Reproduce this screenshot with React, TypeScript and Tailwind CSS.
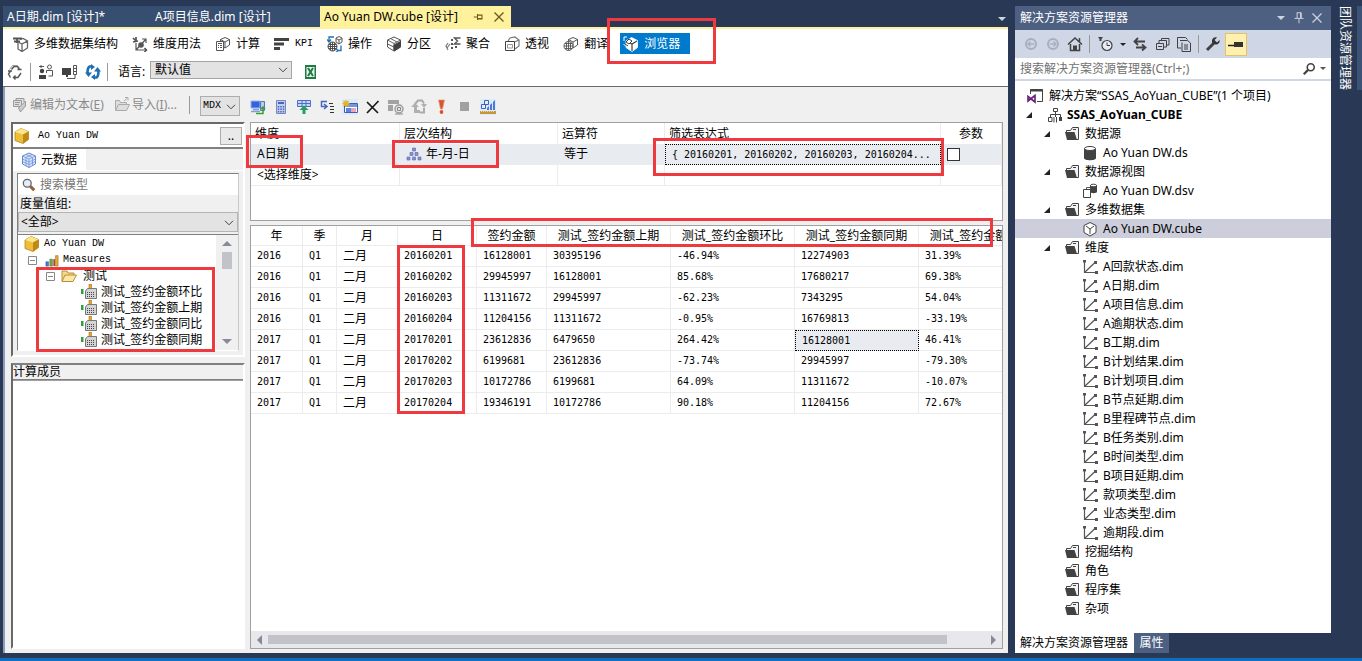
import React from "react";

type IconProps = { children: React.ReactNode; className?: string };

const Icon: React.FC<IconProps> = ({ children, className = "w-4 h-4" }) => (
  <svg
    viewBox="0 0 16 16"
    fill="none"
    stroke="#424242"
    className={`shrink-0 ${className}`}
    aria-hidden="true"
  >
    {children}
  </svg>
);

// Khối lập phương nhỏ dùng lại trong nhiều icon
const CubeLines = ({ stroke = "#555", fill = "#fff" }) => (
  <path d="M10 1.5l4.5 2v5.5L10 12 5.500 9V3.500zM5.500 3.500L10 6l4.500-2.500M10 6v6" stroke={stroke} fill={fill} />
);

const StructureIcon = () => (
  <Icon>
    <path d="M5 5v8l4 2.500 5.500-3.500V5L10 2.500 7 3.500M9 15V8l5.500-3M9 8L6 6.500" stroke="#666" strokeWidth="1.300" fill="#fff" />
    <path d="M0 2.500h9M1 5.500h6M4 3v4" stroke="#555" strokeWidth="1.800" />
  </Icon>
);

const UsageIcon = () => (
  <Icon>
    <path d="M1 2l3 3M4 1v5M1 6l5-1" stroke="#555" strokeWidth="1.700" />
    <path d="M4 7v7h10M4 14L14 3M10 3h4v4" stroke="#555" strokeWidth="1.200" />
    <circle cx="9" cy="9" r="2.800" fill="#555" stroke="none" />
    <path d="M12.500 12l2 2-2 2" strokeWidth="1.400" />
  </Icon>
);

const CalcIcon = () => (
  <Icon>
    <CubeLines />
    <path d="M1.500 5.500h7v9h-7z" fill="#fff" stroke="#555" />
    <path d="M3 7.500h4M3 9.500h1M5 9.500h2M3 11.500h1M5 11.500h2" stroke="#555" />
  </Icon>
);

const KpiIcon = () => (
  <Icon>
    <path d="M0 3.500h15M0 8h10M0 12.500h6" stroke="#424242" strokeWidth="3" />
  </Icon>
);

const ActionIcon = () => (
  <Icon>
    <path d="M7 1H2v4M0 3.500L2 6l2-2.500M11 14.500h3v-5M9 12.500l2 2-2 2" stroke="#1e6fb8" strokeWidth="1.300" />
    <path d="M12 .5l3 1.500v4L12 8 9 6V2zM9 2.500L12 4l3-1.500M12 4v4" fill="#fff" stroke="#555" />
    <circle cx="5.500" cy="10.500" r="4.500" fill="#fff" stroke="#424242" />
    <path d="M1 10.500h9M5.500 6v9M2 8.500h7M2 12.500h7M3.500 7v7M7.500 7v7" stroke="#424242" strokeWidth=".9" />
  </Icon>
);

const PartitionIcon = () => (
  <Icon>
    <path d="M8 1l6.500 3v7L8 15 1.500 11V4z" fill="#fff" stroke="#555" />
    <path d="M1.500 4L8 7.500l6.500-3.500M8 7.500V15M4.500 2.500L11 6" stroke="#666" />
    <path d="M8 9l6.500-3.500V11L8 15z" fill="#424242" />
    <path d="M1.500 8L8 11" stroke="#555" />
  </Icon>
);

const AggregateIcon = () => (
  <Icon>
    <path d="M15.500 2H9.500l3 3-3 3h6" stroke="#555" strokeWidth="1.400" />
    <path d="M3 7l-2 3 2 4M5 8l-3 4" stroke="#777" strokeWidth="1.200" />
    <path d="M6 3h2v2H6zM6 7h2v2H6zM6 11h2v2H6zM10 10h2v2h-2z" fill="#555" stroke="none" />
  </Icon>
);

const PerspectiveIcon = () => (
  <Icon>
    <path d="M4 5l2-3 5-1 4 3v6l-4 3M10.500 6L15 4" stroke="#777" strokeWidth="1.200" />
    <path d="M1.500 5.500h9v9h-9z" fill="#fff" stroke="#424242" />
    <path d="M3.500 8.500h5v3.500h-5z" stroke="#999" />
  </Icon>
);

const TranslateIcon = () => (
  <Icon>
    <CubeLines />
    <circle cx="5.500" cy="10" r="4.500" fill="#fff" stroke="#555" />
    <path d="M1 10h9M5.500 5.500v9M2 7.500h7M2 12.500h7M3.500 6.500v7M7.500 6.500v7" stroke="#555" strokeWidth=".9" />
  </Icon>
);

const BrowserIcon = () => (
  <Icon>
    <path d="M8.500 1.500l6 3v7L9 15.500l-6-4V5z" fill="#fff" stroke="#e8f1f8" />
    <path d="M4 5.500L9 8l5-3M9 8v7" stroke="#424242" strokeWidth="1.200" />
    <path d="M3 6l3-3 3 2-3 3zM2 8l3 2" fill="#fff" stroke="#424242" />
    <path d="M1 5V1h3M.5 8l2 2" stroke="#fff" />
  </Icon>
);

const ProcessIcon = () => (
  <Icon>
    <path d="M4.500 5.500L7 2.500h3.500l2 3M10.500 5.500h4M3.500 7L1.500 10l2 3.500M1 7h4M6.500 13.500H11l3-4.500M8.500 11.500l-2 2 2 2" stroke="#555" strokeWidth="1.400" />
    <path d="M2.500 5.500L5.500 1.500h5l2.500 3" stroke="#999" />
  </Icon>
);

const UsersIcon = () => (
  <Icon>
    <circle cx="4" cy="7" r="2.200" fill="#424242" stroke="none" />
    <path d="M1 11h7v4H1z" fill="#424242" stroke="none" />
    <circle cx="11.500" cy="3" r="2" stroke="#555" />
    <path d="M8.500 9V6.500h6V12h-4M1 2.500h5M3 4V1" stroke="#555" />
  </Icon>
);

const ConnectIcon = () => (
  <Icon>
    <path d="M0 4h9v7H0zM4 11h2v2H4z" fill="#424242" stroke="none" />
    <path d="M11.500 1.500h3v9h-3zM13 10v4.500H5M12 4.500h2M12 7.500h2" stroke="#555" />
  </Icon>
);

const ReconnectIcon = ({ stroke = "#1a6fb5" }) => (
  <Icon>
    <path d="M6 2.500H4.500Q2.500 4 2.500 8l1 2M10 13.500h1.500Q13.500 12 13.500 8l-1-2" stroke={stroke} strokeWidth="2.500" />
    <path d="M6 0v6l4-3zM10 10v6l-4-3zM0 8.500h7L3.500 13zM9 7.500h7L12.500 3z" fill={stroke} stroke="none" />
  </Icon>
);

const ExcelIcon = () => (
  <Icon>
    <path d="M3 1h11v14H3z" fill="#1f7a45" stroke="none" />
    <path d="M4.500 3h8v10h-8z" fill="#e8f4ec" stroke="none" />
    <path d="M6 4l5 8M11 4l-5 8" stroke="#1f7a45" strokeWidth="2" />
  </Icon>
);

const EditTextIcon = () => (
  <Icon>
    <path d="M1.500 3.500h8v6h-8zM4 3V1.500h8V5M3 5.500h5M3 7.500h4" stroke="#999" fill="#ddd" />
    <path d="M13.500 4v5l-5 6-2-4 3-3z" fill="#ccc" stroke="#999" />
  </Icon>
);

const ImportIcon = () => (
  <Icon>
    <path d="M1.500 13V3.500h4l1 2h6v2M1.500 13.500l3-6h11l-3 6z" fill="#ddd" stroke="#aaa" />
    <path d="M10 4l3-2.500M11 .5h3v3" stroke="#aaa" />
  </Icon>
);

const ServerIcon = () => (
  <Icon>
    <path d="M1 2h9v7H1z" fill="#3563dc" stroke="#98b4ee" />
    <path d="M3 10.500h6M1 12.500h9" stroke="#7f9fd8" strokeWidth="1.500" />
    <path d="M10.500 2.500h4v9h-4z" fill="#bcc9e6" stroke="#5b76b8" />
    <path d="M6 14.500h7V8M11 10l2-2 2 2" stroke="#35a035" strokeWidth="1.500" />
  </Icon>
);

const CalculatorIcon = () => (
  <Icon>
    <path d="M3.500 1.500h9v13h-9z" fill="#c4cfee" stroke="#7489c4" />
    <path d="M5 4h6" stroke="#4c66b5" strokeWidth="2" />
    <path d="M5.500 7v7M8 7v7M10.500 7v7" stroke="#4c66b5" strokeWidth="1.500" strokeDasharray="1.500 1" />
  </Icon>
);

const AddFilterIcon = () => (
  <Icon>
    <path d="M1.500 1.500h13v6h-13z" fill="#c7d6f8" stroke="#4a6fc3" />
    <path d="M2 4.500h12M6 2v5M10 2v5" stroke="#4a6fc3" />
    <path d="M6.500 15v-4H3.500L8 6.500l4.500 4.500h-3v4z" fill="#23a063" stroke="none" />
  </Icon>
);

const AutoIcon = () => (
  <Icon>
    <path d="M8 2.500H2.500v5H7M5 5l3 2.500L5 10" stroke="#4667bd" strokeWidth="1.500" />
    <path d="M10 4.500h4M11 7.500h4M11 10.500h4M11 13.500h4" stroke="#333" />
  </Icon>
);

const DesignIcon = () => (
  <Icon>
    <path d="M2.500 4.500h13v9h-13z" fill="#fff" stroke="#3e5fae" />
    <path d="M3 5h12v3H3z" fill="#7695df" stroke="none" />
    <path d="M4 9h5v4H4z" fill="#5c85e0" stroke="none" />
    <path d="M9 9h5v4H9z" fill="#efa4b4" stroke="none" />
    <path d="M4 1v7M.5 4.500h7M1.500 2l5 5M6.500 2l-5 5" stroke="#e8b31c" strokeWidth="1.300" />
  </Icon>
);

const DeleteIcon = () => (
  <Icon>
    <path d="M2 3l11 11M13.500 2L2 14" stroke="#1a1a1a" strokeWidth="1.700" />
  </Icon>
);

const MdxUserIcon = () => (
  <Icon>
    <path d="M0 1h11v4H0zM0 6h5v6H0z" fill="#a2a2a2" stroke="none" />
    <circle cx="11" cy="10" r="4" fill="#e6e6e6" stroke="#999" strokeWidth="1.400" />
    <path d="M7 15h8M9.500 8.500h3v3h-3z" stroke="#888" />
  </Icon>
);

const GrayCycleIcon = () => (
  <Icon>
    <path d="M4 5l3-3.500h4l2 3M13 9v4.500H9" stroke="#aaa" strokeWidth="2" />
    <path d="M0 8l4-4 4 4H6v3h3v3H3V8zM10 5h6l-3 4z" fill="#b0b0b0" stroke="none" />
  </Icon>
);

const RunIcon = () => (
  <Icon>
    <path d="M4.500 1h6L8.500 10h-2z" fill="#d8552b" stroke="#e79a7c" strokeWidth=".7" />
    <circle cx="7.500" cy="13" r="1.900" fill="#d8552b" stroke="none" />
  </Icon>
);

const StopIcon = () => (
  <Icon>
    <path d="M3 3h9v9H3z" fill="#a0a0a0" stroke="none" />
  </Icon>
);

const ChartIcon = () => (
  <Icon>
    <path d="M4.500 1.500h4v4h-4zM1.500 5.500h4v4h-4z" fill="#e6eefc" stroke="#3c62b8" />
    <path d="M7 11V9l8-8v10z" fill="#4c78d8" stroke="none" />
    <path d="M9.500 1v10M12.500 1v10" stroke="#dcebfb" />
    <path d="M0 13.500h16" stroke="#c7953a" strokeWidth="3" />
    <path d="M1 12.500h14" stroke="#f3d9a0" strokeDasharray="1 1" />
  </Icon>
);

const GoldCube = () => (
  <Icon>
    <path d="M7 .5l7.500 3v8L9 15.500l-8-3V4z" fill="#efbd36" stroke="#a87810" strokeWidth=".7" />
    <path d="M1 4l8 2.500 5.500-3L7 .5z" fill="#fbe58a" stroke="none" />
    <path d="M9 6.500l5.500-3v8L9 15.500z" fill="#bd8a17" stroke="none" />
  </Icon>
);

const MetaIcon = () => (
  <Icon>
    <path d="M8 1l6.500 3v8L8 15.500 1.500 12V4z" fill="#dbe8fb" stroke="#6488cf" />
    <path d="M1.500 4L8 7l6.500-3M1.500 7L8 10l6.500-3M1.500 9.500L8 12.500l6.500-3M8 7v8.500M5 2.500L11.500 5.500V14M11 2.500L5 5.500V14" stroke="#6e92d8" strokeWidth=".8" />
  </Icon>
);

const SearchModelIcon = () => (
  <Icon className="w-3.5 h-3.5">
    <circle cx="6" cy="6" r="4.500" fill="#e4eefb" stroke="#666" strokeWidth="1.500" />
    <path d="M9.500 9.500l4.500 4.500" stroke="#9a5b3a" strokeWidth="3.500" />
  </Icon>
);

const BarsIcon = () => (
  <Icon className="w-3.5 h-3.5">
    <path d="M1 10h3v5H1z" fill="#4d78c8" stroke="#345a9f" strokeWidth=".6" />
    <path d="M5.500 7h3v8h-3z" fill="#6aa84f" stroke="#4d7f38" strokeWidth=".6" />
    <path d="M9.500 7h2v8h-2z" fill="#b3423b" stroke="none" />
    <path d="M12 3h3v12h-3z" fill="#e0a93a" stroke="#96701b" strokeWidth=".6" />
  </Icon>
);

const OpenFolderIcon = () => (
  <Icon>
    <path d="M1 13V3h5l1 2h6v2" fill="#f6d987" stroke="#b98e37" />
    <path d="M1 13.500l3-6.500h11.500l-3.500 6.500z" fill="#fbe7a8" stroke="#b98e37" />
  </Icon>
);

const MeasureIcon = () => (
  <Icon>
    <path d="M0 5h2.500v5H0z" fill="#2f9e44" stroke="none" />
    <path d="M8 0h2.500v5H8z" fill="#e8a72a" stroke="#a66f12" strokeWidth=".6" />
    <path d="M4.500 7l2-2.500h9v10h-11z" fill="#d4d4d4" stroke="#777" />
    <path d="M6 8.500h8M6 10.500h8M6 12.500h8" stroke="#444" strokeDasharray="1 1" />
  </Icon>
);

const HierarchyIcon = () => (
  <Icon>
    <path d="M6.500 2h3v3h-3zM4 6.500h3v3H4zM9 6.500h3v3H9zM1 11h3v3H1zM6.500 11h3v3h-3zM12 11h3v3h-3z" fill="#8a92d4" stroke="#5a62a8" strokeWidth=".6" />
  </Icon>
);

const FolderIcon = () => (
  <Icon>
    <path d="M2.500 7V4.500h4l2-3h6v12H12" stroke="#424242" fill="#f4f4f4" />
    <path d="M9 3.500h3" stroke="#424242" />
    <path d="M1 6h9.500L13 14H3z" fill="#424242" stroke="none" />
  </Icon>
);

const DatabaseIcon = () => (
  <Icon>
    <path d="M2 3.500v9.500c0 3 12 3 12 0V3.500z" fill="#424242" stroke="none" />
    <ellipse cx="8" cy="3.500" rx="5.500" ry="2" fill="#fff" stroke="#424242" />
  </Icon>
);

const DsvIcon = () => (
  <Icon>
    <path d="M8 2v7c0 1.500 7 1.500 7 0V2z" fill="#424242" stroke="none" />
    <ellipse cx="11.500" cy="2.500" rx="3" ry="1.300" fill="#fff" stroke="#424242" />
    <path d="M4.500 7V4.500H8" stroke="#555" />
    <path d="M1.500 6.500h7v8h-7z" fill="#fff" stroke="#424242" />
  </Icon>
);

const CubeFileIcon = () => (
  <Icon>
    <path d="M8 1.500l6 3v7l-6 3.500-6-3.500v-7z" fill="#fff" stroke="#424242" />
    <path d="M4 5l4 3 4-3M8 8v5" stroke="#424242" />
  </Icon>
);

const DimIcon = () => (
  <Icon>
    <path d="M2.500 2v11.500H14M2.500 13.500L13 3.500" stroke="#555" strokeWidth="1.200" />
    <path d="M1 1h3v2.500H1zM12 2h3v3h-3zM13 12h3v3h-3z" fill="#555" stroke="none" />
  </Icon>
);

const SolutionIcon = () => (
  <Icon>
    <path d="M3.500 6V1.500h12v12H10" stroke="#424242" fill="#fff" />
    <path d="M3 2.500h13" stroke="#424242" strokeWidth="2" />
    <path d="M1 8.500l7 5.500V7.500L1 13z" stroke="#68217a" strokeWidth="1.600" />
  </Icon>
);

const ProjectIcon = () => (
  <Icon>
    <path d="M6.500 1.500h4v3h-4zM8.500 5v3M3.500 10V7.500h10V10M8.500 8v2M1.500 10.500h3.500v4H1.500zM7 10v5.500M9.500 10v5.500" stroke="#424242" />
    <path d="M12 10h3v4h-3z" fill="#424242" stroke="none" />
  </Icon>
);

const Chevron = ({ className = "" }) => (
  <svg viewBox="0 0 10 6" className={`pointer-events-none absolute w-2.5 h-1.5 ${className}`} fill="none" stroke="#444" aria-hidden="true">
    <path d="M1 .8l4 4 4-4" />
  </svg>
);

const designerTabs = [
  { label: "多维数据集结构", icon: <StructureIcon /> },
  { label: "维度用法", icon: <UsageIcon /> },
  { label: "计算", icon: <CalcIcon /> },
  { label: "KPI", icon: <KpiIcon />, mono: true },
  { label: "操作", icon: <ActionIcon /> },
  { label: "分区", icon: <PartitionIcon /> },
  { label: "聚合", icon: <AggregateIcon /> },
  { label: "透视", icon: <PerspectiveIcon /> },
  { label: "翻译", icon: <TranslateIcon /> },
];

const queryTools = [
  { name: "服务器", icon: <ServerIcon /> },
  { name: "计算成员", icon: <CalculatorIcon /> },
  { name: "添加筛选", icon: <AddFilterIcon /> },
  { name: "自动执行", icon: <AutoIcon /> },
  { name: "显示空单元", icon: <DesignIcon />, active: true },
  { name: "删除", icon: <DeleteIcon /> },
  { name: "参数", icon: <MdxUserIcon /> },
  { name: "刷新", icon: <GrayCycleIcon /> },
  { name: "执行", icon: <RunIcon /> },
  { name: "停止", icon: <StopIcon /> },
  { name: "设计模式", icon: <ChartIcon />, active: true },
];

const measures = ["测试_签约金额环比", "测试_签约金额上期", "测试_签约金额同比", "测试_签约金额同期"];

const resultHeaders = ["年", "季", "月", "日", "签约金额", "测试_签约金额上期", "测试_签约金额环比", "测试_签约金额同期", "测试_签约金额同比"];

const resultRows = [
  ["2016", "Q1", "二月", "20160201", "16128001", "30395196", "-46.94%", "12274903", "31.39%"],
  ["2016", "Q1", "二月", "20160202", "29945997", "16128001", "85.68%", "17680217", "69.38%"],
  ["2016", "Q1", "二月", "20160203", "11311672", "29945997", "-62.23%", "7343295", "54.04%"],
  ["2016", "Q1", "二月", "20160204", "11204156", "11311672", "-0.95%", "16769813", "-33.19%"],
  ["2017", "Q1", "二月", "20170201", "23612836", "6479650", "264.42%", "16128001", "46.41%"],
  ["2017", "Q1", "二月", "20170202", "6199681", "23612836", "-73.74%", "29945997", "-79.30%"],
  ["2017", "Q1", "二月", "20170203", "10172786", "6199681", "64.09%", "11311672", "-10.07%"],
  ["2017", "Q1", "二月", "20170204", "19346191", "10172786", "90.18%", "11204156", "72.67%"],
];

type TreeNode = { label: string; kind: "folder" | "ds" | "dsv" | "cube" | "dim"; open?: boolean };

const dimFiles = [
  "A回款状态", "A日期", "A项目信息", "A逾期状态", "B工期", "B计划结果", "B计划项目", "B节点延期",
  "B里程碑节点", "B任务类别", "B时间类型", "B项目延期", "款项类型", "业态类型", "逾期段",
];

const solutionTree: TreeNode[] = [
  { label: "数据源", kind: "folder", open: true },
  { label: "Ao Yuan DW.ds", kind: "ds" },
  { label: "数据源视图", kind: "folder", open: true },
  { label: "Ao Yuan DW.dsv", kind: "dsv" },
  { label: "多维数据集", kind: "folder", open: true },
  { label: "Ao Yuan DW.cube", kind: "cube" },
  { label: "维度", kind: "folder", open: true },
  ...dimFiles.map((d): TreeNode => ({ label: `${d}.dim`, kind: "dim" })),
  { label: "挖掘结构", kind: "folder" },
  { label: "角色", kind: "folder" },
  { label: "程序集", kind: "folder" },
  { label: "杂项", kind: "folder" },
];

const nodeIcons = {
  folder: <FolderIcon />,
  ds: <DatabaseIcon />,
  dsv: <DsvIcon />,
  cube: <CubeFileIcon />,
  dim: <DimIcon />,
};

// Khung đỏ đánh dấu các vùng cần chú ý
const marks = [
  "left-[607px] top-[18px] w-[109px] h-[46px]",
  "left-[246px] top-[135px] w-[57px] h-[33px]",
  "left-[392px] top-[140px] w-[107px] h-[28px]",
  "left-[653px] top-[138px] w-[291px] h-[38px]",
  "left-[471px] top-[218px] w-[522px] h-[29px]",
  "left-[397px] top-[245px] w-[68px] h-[169px]",
  "left-[36px] top-[267px] w-[179px] h-[85px]",
];

const Separator = () => <span className="w-px h-[18px] bg-[#999] shrink-0" />;

const Expander = () => (
  <svg viewBox="0 0 9 9" className="w-[9px] h-[9px] shrink-0" fill="#fff" stroke="#888" aria-hidden="true">
    <path d="M.5.5h8v8h-8zM2 4.500h5" />
  </svg>
);

const DocumentTabs = () => (
  <div className="flex items-stretch h-[21px] shrink-0">
    <button type="button" className="w-[148px] pl-1 text-left bg-[#364e6f] text-white">
      A日期.dim [设计]*
    </button>
    <button type="button" className="w-[169px] pl-1 text-left bg-[#364e6f] text-white">
      A项目信息.dim [设计]
    </button>
    <div className="w-[191px] pl-1 pr-1.5 flex items-center bg-[#fff29d] whitespace-nowrap">
      <span className="flex-1">Ao Yuan DW.cube [设计]</span>
      <button type="button" aria-label="固定" className="mr-2">
        <Icon className="w-3 h-3">
          <path d="M1 8h5M6 4v8M6 5.500h6v5H6M6 10h6" stroke="#6b5c23" strokeWidth="1.400" />
        </Icon>
      </button>
      <button type="button" aria-label="关闭">
        <Icon className="w-3 h-3">
          <path d="M2 2l12 12M14 2L2 14" stroke="#6b5c23" strokeWidth="1.800" />
        </Icon>
      </button>
    </div>
    <button type="button" aria-label="更多文档" className="ml-auto mr-0.5 mt-1">
      <svg viewBox="0 0 8 4" className="w-2 h-1" fill="#ced4dd"><path d="M0 0h8L4 4z" /></svg>
    </button>
  </div>
);

const DesignerBar = () => (
  <div className="h-[58px] shrink-0 bg-white border-b border-[#696969]">
    <div className="flex items-center h-[29px] pl-2.5 gap-3.5 whitespace-nowrap">
      {designerTabs.map((t) => (
        <button key={t.label} type="button" className="flex items-center gap-[5px]">
          {t.icon}
          <span className={t.mono ? "font-['Liberation_Mono'] text-[10px]" : ""}>{t.label}</span>
        </button>
      ))}
      <button
        type="button"
        className="flex items-center gap-[5px] h-[21px] w-[70px] -ml-0.5 pl-[3px] bg-[#007acc] text-white"
      >
        <BrowserIcon />
        浏览器
      </button>
    </div>
    <div className="flex items-center h-7 pl-1">
      <button type="button" aria-label="处理" className="mr-[7px]"><ProcessIcon /></button>
      <Separator />
      <button type="button" aria-label="更改用户" className="ml-[7px] mr-2"><UsersIcon /></button>
      <button type="button" aria-label="连接" className="mr-[7px]"><ConnectIcon /></button>
      <button type="button" aria-label="重新连接" className="mr-1.5"><ReconnectIcon /></button>
      <Separator />
      <label htmlFor="language" className="ml-2.5 w-8">语言:</label>
      <div className="relative mb-1">
        <select id="language" className="appearance-none block w-[142px] h-[18px] pl-1 leading-4 bg-[#e3e3e3] border border-[#a5a5a5]">
          <option>默认值</option>
        </select>
        <Chevron className="right-1 top-1.5" />
      </div>
      <span className="ml-0.5 mr-2"><Separator /></span>
      <button type="button" aria-label="在 Excel 中分析"><ExcelIcon /></button>
    </div>
  </div>
);

const QueryBar = () => (
  <div className="flex items-center h-[35px] shrink-0 pl-[7px] whitespace-nowrap">
    <button type="button" className="flex items-center gap-0.5 w-[102px] text-[#8a8a8a]">
      <EditTextIcon />
      <span>编辑为文本(<u>E</u>)</span>
    </button>
    <button type="button" className="flex items-center gap-0.5 w-[75px] text-[#8a8a8a]">
      <ImportIcon />
      <span>导入(<u>I</u>)...</span>
    </button>
    <Separator />
    <div className="relative ml-2.5 mr-2.5 mt-0.5">
      <select aria-label="查询语言" className="appearance-none block w-10 h-5 pl-0.5 font-['Liberation_Mono'] text-[10px] bg-[#e3e3e3] border border-[#adadad]">
        <option>MDX</option>
      </select>
      <Chevron className="right-1 top-2" />
    </div>
    <div className="flex gap-[7px] mt-1">
      {queryTools.map((t) => (
        <button key={t.name} type="button" aria-label={t.name} className={t.active ? "bg-[#dcebfb]" : ""}>
          {t.icon}
        </button>
      ))}
    </div>
  </div>
);

const MetadataPane = () => (
  <div className="w-[234px] shrink-0 flex flex-col gap-1.5">
    <section className="h-[235px] border-2 border-t-[#696969] border-l-[#696969] border-r-white border-b-white">
      <div className="flex items-center h-[25px] pl-px bg-white border-b-2 border-[#808080]">
        <GoldCube />
        <span className="flex-1 pl-2 font-['Liberation_Mono'] text-[10px]">Ao Yuan DW</span>
        <button type="button" className="w-[22px] h-[18px] mr-px border border-[#adadad] bg-[#e9e9e9] leading-3">..</button>
      </div>
      <div className="flex h-[22px]">
        <button type="button" className="flex items-center gap-1 w-[73px] pl-2 bg-white">
          <MetaIcon />
          元数据
        </button>
        <span className="flex-1 border-b border-white" />
      </div>
      <div className="m-1 mt-0.5 h-[178px] flex flex-col border border-[#808080] border-r-[#c8c8c8] border-b-white">
        <label className="flex items-center h-[21px] pl-1 gap-1 bg-white">
          <SearchModelIcon />
          <input type="text" aria-label="搜索模型" placeholder="搜索模型" className="flex-1 min-w-0 outline-none placeholder:text-[#767676]" />
        </label>
        <label htmlFor="group" className="h-[17px] pl-0.5 leading-[17px]">度量值组:</label>
        <div className="relative">
          <select id="group" className="appearance-none block w-full h-5 pl-0.5 leading-4 bg-[#e3e3e3] border border-[#b5b5b5]">
            <option>&lt;全部&gt;</option>
          </select>
          <Chevron className="right-1 top-2" />
        </div>
        <div className="flex flex-1 min-h-0 mt-0.5 border-t border-[#808080] bg-white">
          <ul className="flex-1 pt-px [&>li]:flex [&>li]:items-center [&>li]:h-4 [&>li]:whitespace-nowrap">
            <li className="pl-1.5 gap-1 font-['Liberation_Mono'] text-[10px]"><GoldCube />Ao Yuan DW</li>
            <li className="pl-2.5 gap-2 font-['Liberation_Mono'] text-[10px]">
              <Expander />
              <span className="flex items-center gap-1"><BarsIcon />Measures</span>
            </li>
            <li className="pl-7 gap-1.5"><Expander /><OpenFolderIcon />测试</li>
            {measures.map((m) => (
              <li key={m} className="pl-[63px] gap-1"><MeasureIcon />{m}</li>
            ))}
          </ul>
          <div className="w-[22px] flex flex-col items-center bg-[#f0f0f0] py-1.5">
            <svg viewBox="0 0 10 5" className="w-2.5 h-[5px]" fill="#868999"><path d="M5 0l5 5H0z" /></svg>
            <span className="w-2.5 h-[17px] mt-1.5 bg-[#c2c3c9]" />
            <svg viewBox="0 0 10 5" className="w-2.5 h-[5px] mt-auto" fill="#868999"><path d="M0 0h10L5 5z" /></svg>
          </div>
        </div>
      </div>
    </section>
    <section className="flex-1 flex flex-col border-2 border-t-[#808080] border-l-[#696969] border-r-white border-b-white">
      <h2 className="h-[15px] leading-[13px] border-b border-[#808080]">计算成员</h2>
      <div className="flex-1 bg-white border-t border-[#a0a0a0]" />
    </section>
  </div>
);

const FilterGrid = () => (
  <div className="h-[99px] shrink-0 bg-white border border-[#a0a0a0] overflow-hidden">
    <table className="w-full table-fixed border-separate border-spacing-0 [&_td]:border-r [&_td]:border-b [&_td]:border-[#ececec] [&_td]:h-[21px] [&_td]:p-0 [&_td]:pl-1.5 [&_th]:h-[21px] [&_th]:p-0 [&_th]:pl-1 [&_th]:border-r [&_th]:border-[#ececec] [&_th]:font-normal [&_th]:text-left">
      <colgroup>
        <col className="w-[149px]" />
        <col className="w-[158px]" />
        <col className="w-[107px]" />
        <col />
        <col className="w-[61px]" />
      </colgroup>
      <thead>
        <tr>
          <th>维度</th>
          <th>层次结构</th>
          <th>运算符</th>
          <th>筛选表达式</th>
          <th className="pl-0! text-center!">参数</th>
        </tr>
      </thead>
      <tbody>
        <tr className="bg-[#e8ecf0]">
          <td>A日期</td>
          <td><span className="flex items-center gap-1"><HierarchyIcon />年-月-日</span></td>
          <td>等于</td>
          <td className="border! border-dotted! border-black! whitespace-nowrap overflow-hidden font-['DejaVu_Sans_Mono'] text-[10px]">
            {"{ 20160201, 20160202, 20160203, 20160204..."}
          </td>
          <td>
            <input type="checkbox" aria-label="参数" className="appearance-none block w-[13px] h-[13px] bg-white border border-[#333]" />
          </td>
        </tr>
        <tr>
          <td>&lt;选择维度&gt;</td>
          <td />
          <td />
          <td />
          <td />
        </tr>
      </tbody>
    </table>
  </div>
);

const ResultGrid = () => (
  <div className="flex-1 min-h-0 flex flex-col bg-white border border-[#a0a0a0]">
    <div className="flex-1 min-h-0 overflow-hidden">
      <table className="w-[792px] table-fixed border-separate border-spacing-0">
        <colgroup>
          <col className="w-[52px]" />
          <col className="w-[34px]" />
          <col className="w-[61px]" />
          <col className="w-[79px]" />
          <col className="w-[70px]" />
          <col className="w-[124px]" />
          <col className="w-[124px]" />
          <col className="w-[124px]" />
          <col className="w-[124px]" />
        </colgroup>
        <thead>
          <tr>
            {resultHeaders.map((h) => (
              <th key={h} className="h-5 p-0 font-normal whitespace-nowrap border-r border-b border-[#ececec]">{h}</th>
            ))}
          </tr>
        </thead>
        <tbody>
          {resultRows.map((row, r) => (
            <tr key={row[3]}>
              {row.map((cell, c) => (
                <td
                  key={c}
                  className={`h-[21px] p-0 pl-1.5 ${
                    r === 4 && c === 7
                      ? "border border-dotted border-black bg-[#e8ecf0]"
                      : "border-r border-b border-[#ececec]"
                  } ${c === 2 ? "" : "font-['DejaVu_Sans_Mono'] text-[10px]"}`}
                >
                  {cell}
                </td>
              ))}
            </tr>
          ))}
        </tbody>
      </table>
    </div>
    <div className="flex items-center h-[17px] px-1.5 bg-[#e8e8ec]">
      <svg viewBox="0 0 5 10" className="w-[5px] h-2.5" fill="#868999"><path d="M5 0v10L0 5z" /></svg>
      <span className="flex-1 ml-1.5 mr-11 h-[9px] bg-[#c2c3c9]" />
      <svg viewBox="0 0 5 10" className="w-[5px] h-2.5" fill="#868999"><path d="M0 0v10l5-5z" /></svg>
    </div>
  </div>
);

const SolutionExplorer = () => (
  <aside className="w-[316px] shrink-0 flex flex-col">
    <header className="flex items-center h-6 px-[5px] bg-[#4d6082] text-white">
      <h2 className="flex-1">解决方案资源管理器</h2>
      <button type="button" aria-label="窗口位置" className="mr-2">
        <svg viewBox="0 0 8 4" className="w-2 h-1" fill="#ced4dd"><path d="M0 0h8L4 4z" /></svg>
      </button>
      <button type="button" aria-label="自动隐藏" className="mr-1.5">
        <Icon className="w-3 h-3">
          <path d="M5 1h6M5.500 1v7M10 1v7M11 1v7M2 8.500h12M8 9v6" stroke="#ced4dd" strokeWidth="1.300" />
        </Icon>
      </button>
      <button type="button" aria-label="关闭" className="mr-[3px]">
        <Icon className="w-3 h-3">
          <path d="M2 2l12 12M14 2L2 14" stroke="#ced4dd" strokeWidth="1.600" />
        </Icon>
      </button>
    </header>
    <div className="flex items-center h-7 pl-2 bg-[#cfd6e5]">
      <button type="button" aria-label="后退" className="mr-1.5">
        <Icon><circle cx="8" cy="8" r="5" stroke="#a9b0bd" strokeWidth="2" /><path d="M11 8H5M7.500 5.500L5 8l2.500 2.500" stroke="#a9b0bd" strokeWidth="1.400" /></Icon>
      </button>
      <button type="button" aria-label="前进" className="mr-1.5">
        <Icon><circle cx="8" cy="8" r="5" stroke="#a9b0bd" strokeWidth="2" /><path d="M5 8h6M8.500 5.500L11 8l-2.500 2.500" stroke="#a9b0bd" strokeWidth="1.400" /></Icon>
      </button>
      <button type="button" aria-label="主页" className="mr-1.5">
        <Icon>
          <path d="M3.500 8v6.500h9V8M1 8.500L8 2l7 6.500M12.500 6V2" strokeWidth="1.500" />
          <path d="M6 9.500h4v5H6z" fill="#424242" stroke="none" />
        </Icon>
      </button>
      <Separator />
      <button type="button" aria-label="挂起的更改" className="ml-2 flex items-center gap-1.5">
        <Icon>
          <circle cx="9" cy="9.500" r="5" fill="#e8ecf4" strokeWidth="1.200" />
          <path d="M9 6.500v3h3" />
          <path d="M0 1h5L3.500 3v2h-2V3z" fill="#424242" stroke="none" />
        </Icon>
        <svg viewBox="0 0 6 3" className="w-1.5 h-[3px]" fill="#222"><path d="M0 0h6L3 3z" /></svg>
      </button>
      <button type="button" aria-label="同步" className="ml-1.5 mr-1.5">
        <Icon><path d="M13 5.500H3M6 2L2.500 5.500 6 9M4 11.500h9M10 8.500l3.500 3-3.500 3" strokeWidth="1.800" /></Icon>
      </button>
      <button type="button" aria-label="全部折叠" className="mr-1.5">
        <Icon><path d="M2.500 7.500h7v6h-7zM4 10.500h4M5 7V4.500h7.500V11H10M7.500 4V2.500H15V9h-2" /></Icon>
      </button>
      <button type="button" aria-label="显示所有文件" className="mr-1.5">
        <Icon><path d="M5 12H1.500V1.500h8l2 2M4 4.500h7.500L14.500 7v8.500H6V6.500M8 9h4M8 11h4M8 13h4" /></Icon>
      </button>
      <Separator />
      <button type="button" aria-label="属性" className="ml-1.5">
        <Icon>
          <path d="M2 14l6.500-6.500" strokeWidth="3" />
          <path d="M14.500 4L12 6.500 9.500 4 12 1.500C8 .5 6 4 7.500 7.500c3 2.500 8 .5 7-3.500z" fill="#333" stroke="none" />
        </Icon>
      </button>
      <button type="button" aria-label="预览" className="ml-1 w-[22px] h-[23px] grid place-items-center bg-[#fff0ad] border border-[#e5c365]">
        <Icon><path d="M0 9.500h8" strokeWidth="1.500" stroke="#222" /><path d="M6 6h9v5H6z" fill="#333" stroke="none" /></Icon>
      </button>
    </div>
    <label className="flex items-center h-[23px] pl-[5px] pr-[5px] bg-white border-b-2 border-[#cfd6e5]">
      <input type="text" aria-label="搜索解决方案资源管理器" placeholder="搜索解决方案资源管理器(Ctrl+;)" className="flex-1 min-w-0 outline-none placeholder:text-[#717171]" />
      <Icon className="w-3.5 h-3.5">
        <circle cx="10" cy="6" r="4" strokeWidth="1.800" />
        <path d="M7 9l-5 5" strokeWidth="2.500" />
      </Icon>
      <svg viewBox="0 0 6 3" className="w-1.5 h-[3px] ml-1" fill="#555"><path d="M0 0h6L3 3z" /></svg>
    </label>
    <ul className="flex-1 min-h-0 overflow-hidden pt-[5px] bg-white [&>li]:flex [&>li]:items-center [&>li]:h-[19px] [&>li]:whitespace-nowrap">
      <li className="pl-3 gap-1.5"><SolutionIcon />解决方案“SSAS_AoYuan_CUBE”(1 个项目)</li>
      <li className="pl-2.5 gap-1 font-bold">
        <svg viewBox="0 0 8 8" className="w-2 h-2 mr-2.5"><path d="M7 1v6H1z" fill="#222" /></svg>
        <ProjectIcon />
        SSAS_AoYuan_CUBE
      </li>
      {solutionTree.map((n) => (
        <li
          key={n.label}
          className={`gap-[5px] ${n.kind === "folder" ? "pl-7" : "pl-[67px]"} ${n.kind === "cube" ? "bg-[#cccedb]" : ""}`}
        >
          {n.kind === "folder" && (
            <svg viewBox="0 0 8 8" className="w-2 h-2 mr-2">
              {n.open && <path d="M7 1v6H1z" fill="#222" />}
            </svg>
          )}
          {nodeIcons[n.kind]}
          {n.label}
        </li>
      ))}
    </ul>
    <div className="flex h-5 shrink-0">
      <button type="button" className="w-[119px] pl-[5px] text-left bg-white">解决方案资源管理器</button>
      <button type="button" className="w-[35px] bg-[#4d6082] text-white">属性</button>
    </div>
  </aside>
);

const App: React.FC = () => (
  <div className="relative h-screen flex flex-col pt-1.5 overflow-hidden bg-[#293955] text-xs text-black font-['Noto_Sans','Noto_Sans_CJK_SC',sans-serif]">
    <div className="flex flex-1 min-h-0">
      <main className="flex-1 min-w-0 ml-[3px] mr-[7px] flex flex-col">
        <DocumentTabs />
        <div className="h-0.5 shrink-0 bg-[#fff29d]" />
        <DesignerBar />
        <div className="flex-1 min-h-0 flex flex-col bg-[#f0f0f0] border-l-2 border-[#8e9bbc]">
          <QueryBar />
          <div className="flex flex-1 min-h-0 pl-1.5 pr-[5px] pb-1 gap-[5px]">
            <MetadataPane />
            <div className="flex-1 min-w-0 flex flex-col gap-1">
              <FilterGrid />
              <ResultGrid />
            </div>
          </div>
        </div>
      </main>
      <SolutionExplorer />
      <div className="w-[31px] shrink-0 flex justify-between">
        <button type="button" className="self-start pl-1.5 leading-4 text-white [writing-mode:vertical-rl] [text-orientation:sideways]">
          团队资源管理器
        </button>
        <span className="w-[5px] h-[84px] bg-[#3d5277]" />
      </div>
    </div>
    <footer className="mt-[5px] h-[3px] shrink-0 bg-[#0e6fc0]" />
    {marks.map((m) => (
      <span key={m} className={`absolute pointer-events-none border-[3px] border-[#ee3a3f] ${m}`} />
    ))}
  </div>
);

export default App;
